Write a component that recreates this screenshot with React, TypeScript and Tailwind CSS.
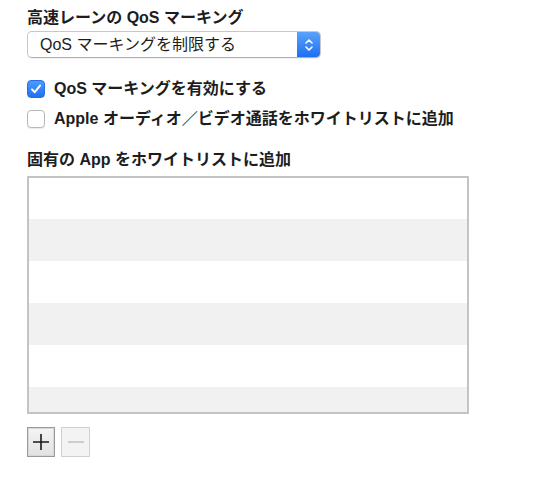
const FONT = { fontFamily: '"Liberation Sans", "Noto Sans CJK JP", sans-serif' };

const Checkbox = ({ checked }: { checked: boolean }) =>
  checked ? (
    <div className="w-[18px] h-[18px] rounded-[4px] bg-gradient-to-b from-[#4d9bfd] to-[#1f6ff2] border border-[#2a6fe0] flex items-center justify-center">
      <svg width="12" height="12" viewBox="0 0 12 12">
        <path d="M2 6.4 L4.8 9.2 L10 2.6" fill="none" stroke="white" strokeWidth="2" strokeLinecap="round" strokeLinejoin="round" />
      </svg>
    </div>
  ) : (
    <div className="w-[18px] h-[18px] rounded-[4px] bg-white border border-[#b8b8b8] shadow-[0_1px_1px_rgba(0,0,0,0.08)]" />
  );

const App = () => {
  const rows = [41, 42, 42, 42, 42, 27];

  return (
    <div className="w-[539px] h-[479px] bg-white pl-[27px] pt-[8px] text-[16px] text-[#1d1d1d]" style={FONT}>
      <div className="h-[20px] leading-[20px] font-bold">高速レーンの QoS マーキング</div>

      <div className="mt-[3px] w-[294px] h-[27px] flex rounded-[5px] border border-[#c8c8c8] border-b-[#b0b0b0] bg-white shadow-[0_1px_1px_rgba(0,0,0,0.06)] overflow-hidden">
        <div className="flex-1 pl-[12px] leading-[25px]">QoS マーキングを制限する</div>
        <div className="w-[23px] bg-gradient-to-b from-[#5aa2fb] to-[#1e6ef2] flex items-center justify-center">
          <svg width="10" height="16" viewBox="0 0 10 16">
            <path d="M2 6 L5 3 L8 6 M2 10 L5 13 L8 10" fill="none" stroke="white" strokeWidth="1.6" strokeLinecap="round" strokeLinejoin="round" />
          </svg>
        </div>
      </div>

      <div className="mt-[20px] h-[22px] flex items-center gap-[9px] font-bold">
        <Checkbox checked />
        <span>QoS マーキングを有効にする</span>
      </div>
      <div className="mt-[8px] h-[22px] flex items-center gap-[9px] font-bold">
        <Checkbox checked={false} />
        <span>Apple オーディオ／ビデオ通話をホワイトリストに追加</span>
      </div>

      <div className="mt-[20px] h-[20px] leading-[20px] font-bold">固有の App をホワイトリストに追加</div>

      <div className="mt-[6px] w-[442px] h-[238px] border-2 border-[#c4c4c4] flex flex-col overflow-hidden">
        {rows.map((h, i) => (
          <div
            key={i}
            className={i % 2 === 0 ? "bg-white shrink-0" : "bg-[#f1f1f1] shrink-0"}
            style={{ height: h }}
          />
        ))}
      </div>

      <div className="mt-[13px] flex gap-[6px]">
        <div className="w-[28px] h-[30px] border border-[#9a9a9a] bg-gradient-to-b from-[#f4f4f4] to-[#e2e2e2] shadow-[inset_0_0_0_1px_#d8d8d8] flex items-center justify-center">
          <svg width="18" height="18" viewBox="0 0 18 18">
            <path d="M9 1 V17 M1 9 H17" stroke="#1a1a1a" strokeWidth="1.6" />
          </svg>
        </div>
        <div className="w-[29px] h-[30px] border border-[#d0d0d0] bg-[#f3f3f3] flex items-center justify-center">
          <svg width="18" height="18" viewBox="0 0 18 18">
            <path d="M1 9 H17" stroke="#c4c4c4" strokeWidth="1.6" />
          </svg>
        </div>
      </div>
    </div>
  );
};

export default App;
